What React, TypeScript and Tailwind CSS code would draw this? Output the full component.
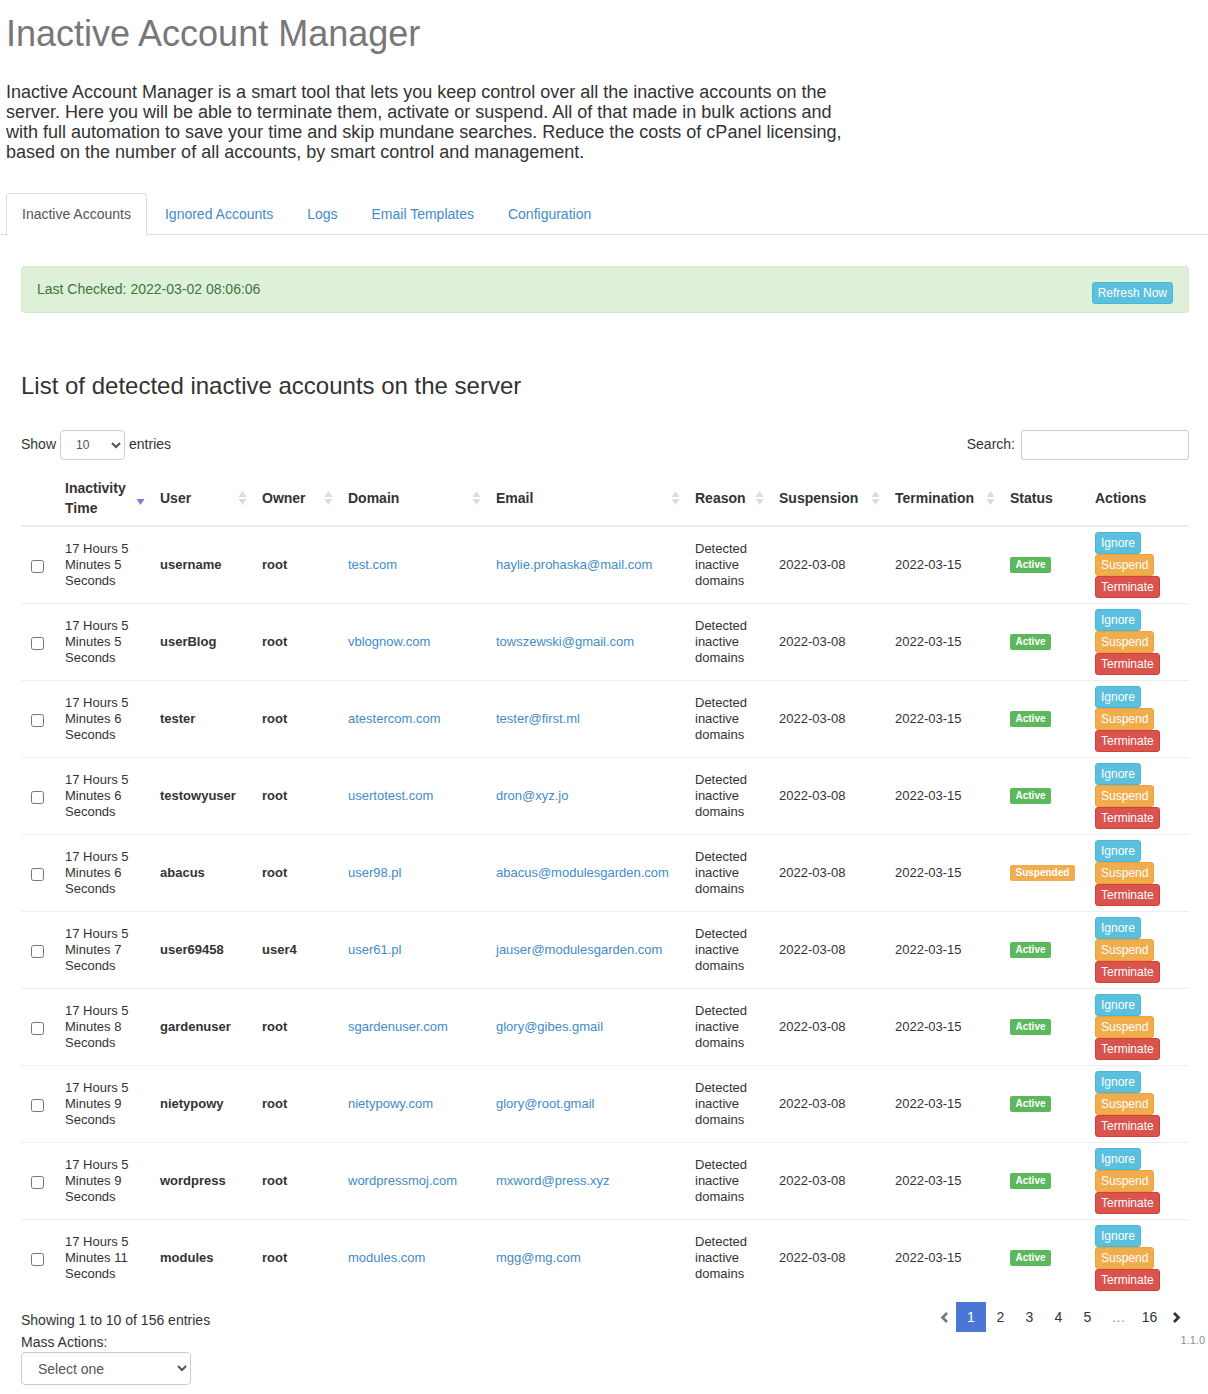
import React from "react";

type Row = { sec: string; user: string; owner: string; domain: string; email: string; status: "Active" | "Suspended" };

const rows: Row[] = [
  { sec: "Minutes 5", user: "username", owner: "root", domain: "test.com", email: "haylie.prohaska@mail.com", status: "Active" },
  { sec: "Minutes 5", user: "userBlog", owner: "root", domain: "vblognow.com", email: "towszewski@gmail.com", status: "Active" },
  { sec: "Minutes 6", user: "tester", owner: "root", domain: "atestercom.com", email: "tester@first.ml", status: "Active" },
  { sec: "Minutes 6", user: "testowyuser", owner: "root", domain: "usertotest.com", email: "dron@xyz.jo", status: "Active" },
  { sec: "Minutes 6", user: "abacus", owner: "root", domain: "user98.pl", email: "abacus@modulesgarden.com", status: "Suspended" },
  { sec: "Minutes 7", user: "user69458", owner: "user4", domain: "user61.pl", email: "jauser@modulesgarden.com", status: "Active" },
  { sec: "Minutes 8", user: "gardenuser", owner: "root", domain: "sgardenuser.com", email: "glory@gibes.gmail", status: "Active" },
  { sec: "Minutes 9", user: "nietypowy", owner: "root", domain: "nietypowy.com", email: "glory@root.gmail", status: "Active" },
  { sec: "Minutes 9", user: "wordpress", owner: "root", domain: "wordpressmoj.com", email: "mxword@press.xyz", status: "Active" },
  { sec: "Minutes 11", user: "modules", owner: "root", domain: "modules.com", email: "mgg@mg.com", status: "Active" },
];

const colWidths = [34, 95, 102, 86, 148, 199, 84, 116, 115, 85, 104];

function SortIcon({ activeDown = false }: { activeDown?: boolean }) {
  return (
    <svg className="absolute right-[5px] top-[21px]" width="9" height="14" viewBox="0 0 9 14">
      {!activeDown && <path d="M4.5 0 L8.5 6 H0.5 Z" fill="#dcdcdc" />}
      <path d="M0.5 8 H8.5 L4.5 14 Z" fill={activeDown ? "#7a7fd8" : "#dcdcdc"} />
    </svg>
  );
}

function Th({ children, sort = false, activeDown = false }: { children?: React.ReactNode; sort?: boolean; activeDown?: boolean }) {
  return (
    <th className="relative h-[56px] border-b-2 border-[#eeeeee] px-[10px] text-left align-middle text-[14px] font-bold leading-[20px] text-[#333333]">
      {children}
      {sort && <SortIcon activeDown={activeDown} />}
    </th>
  );
}

function Btn({ label, color }: { label: string; color: string }) {
  return (
    <button className={`h-[22px] rounded-[3px] border px-[5px] text-[12px] leading-[18px] text-white ${color}`}>{label}</button>
  );
}

function Chevron({ dir, color }: { dir: "left" | "right"; color: string }) {
  return (
    <svg width="9" height="11" viewBox="0 0 9 11" fill="none" stroke={color} strokeWidth="2.7">
      <path d={dir === "left" ? "M7 1 L2.5 5.5 L7 10" : "M2 1 L6.5 5.5 L2 10"} />
    </svg>
  );
}

const td = "border-b border-[#eeeeee] px-[10px] align-middle text-[13px] group-last:border-b-0";

export default function App() {
  return (
    <div className="min-h-[1394px] bg-white font-['Liberation_Sans',Arial,sans-serif] text-[14px] text-[#333333]">
      <div className="px-[6px]">
        <h1 className="pt-[14px] text-[36px] font-normal leading-[40px] text-[#777777]">Inactive Account Manager</h1>
        <p className="mt-[28px] w-[850px] text-[18px] leading-[20px] text-[#333333]">
          Inactive Account Manager is a smart tool that lets you keep control over all the inactive accounts on the server. Here you will be able to terminate them, activate or suspend. All of that made in bulk actions and with full automation to save your time and skip mundane searches. Reduce the costs of cPanel licensing, based on the number of all accounts, by smart control and management.
        </p>
      </div>

      <div className="mt-[31px] flex h-[42px] border-b border-[#dddddd] pl-[6px]">
        <a className="-mb-px h-[43px] rounded-t-[4px] border border-b-0 border-[#dddddd] bg-white px-[15px] pt-[10px] leading-[20px] text-[#555555]">Inactive Accounts</a>
        {["Ignored Accounts", "Logs", "Email Templates", "Configuration"].map((t) => (
          <a key={t} className="ml-[2px] px-[16px] pt-[11px] leading-[20px] text-[#428bca]">{t}</a>
        ))}
      </div>

      <div className="px-[21px] pr-[19px]">
        <div className="mt-[31px] flex h-[47px] justify-between rounded-[4px] border border-[#d6e9c6] bg-[#dff0d8] pl-[15px] pr-[15px] text-[#3c763d]">
          <span className="pt-[13px] leading-[18px]">Last Checked: 2022-03-02 08:06:06</span>
          <button className="mt-[15px] h-[22px] rounded-[3px] border border-[#46b8da] bg-[#5bc0de] px-[5px] text-[12px] leading-[18px] text-white">Refresh Now</button>
        </div>

        <h2 className="mt-[59px] text-[24px] font-normal leading-[28px] text-[#333333]">List of detected inactive accounts on the server</h2>

        <div className="mt-[30px] flex h-[30px] items-center justify-between">
          <div className="flex items-center">
            <span className="mb-[2px]">Show</span>
            <select className="mx-[4px] h-[30px] w-[65px] rounded-[4px] border border-[#cccccc] bg-white pl-[11px] text-[12px] text-[#555555]">
              <option>10</option>
            </select>
            <span className="mb-[2px]">entries</span>
          </div>
          <div className="flex items-center">
            <span className="mb-[2px] mr-[6px]">Search:</span>
            <input className="h-[30px] w-[168px] rounded-[3px] border border-[#cccccc] bg-white" />
          </div>
        </div>

        <table className="mt-[10px] w-[1168px] table-fixed border-collapse">
          <colgroup>
            {colWidths.map((w, i) => (
              <col key={i} style={{ width: w }} />
            ))}
          </colgroup>
          <thead>
            <tr>
              <Th />
              <Th sort activeDown>Inactivity Time</Th>
              <Th sort>User</Th>
              <Th sort>Owner</Th>
              <Th sort>Domain</Th>
              <Th sort>Email</Th>
              <Th sort>Reason</Th>
              <Th sort>Suspension</Th>
              <Th sort>Termination</Th>
              <Th>Status</Th>
              <Th>Actions</Th>
            </tr>
          </thead>
          <tbody>
            {rows.map((r) => (
              <tr key={r.user} className="group h-[77px]">
                <td className={`${td} !px-0`}>
                  <input type="checkbox" className="ml-[10px] mt-[4px] block h-[13px] w-[13px]" />
                </td>
                <td className={`${td} leading-[16px]`}>17 Hours 5 {r.sec} Seconds</td>
                <td className={`${td} font-bold`}>{r.user}</td>
                <td className={`${td} font-bold`}>{r.owner}</td>
                <td className={`${td} whitespace-nowrap text-[#428bca]`}>{r.domain}</td>
                <td className={`${td} whitespace-nowrap text-[#428bca]`}>{r.email}</td>
                <td className={`${td} leading-[16px]`}>Detected inactive domains</td>
                <td className={td}>2022-03-08</td>
                <td className={td}>2022-03-15</td>
                <td className={td}>
                  <span className={`block w-fit whitespace-nowrap rounded-[2px] px-[5.5px] text-[10px] font-bold leading-[16px] text-white ${r.status === "Active" ? "bg-[#5cb85c]" : "bg-[#f0ad4e]"}`}>{r.status}</span>
                </td>
                <td className={td}>
                  <div className="flex flex-col items-start">
                    <Btn label="Ignore" color="border-[#46b8da] bg-[#5bc0de]" />
                    <Btn label="Suspend" color="border-[#eea236] bg-[#f0ad4e]" />
                    <Btn label="Terminate" color="border-[#d43f3a] bg-[#d9534f]" />
                  </div>
                </td>
              </tr>
            ))}
          </tbody>
        </table>

        <div className="flex justify-between">
          <div>
            <div className="mt-[14px] leading-[20px]">Showing 1 to 10 of 156 entries</div>
            <div className="mt-[2px] leading-[20px]">Mass Actions:</div>
            <select className="h-[33px] w-[170px] rounded-[4px] border border-[#cccccc] bg-white pl-[12px] text-[14px] text-[#555555]">
              <option>Select one</option>
            </select>
          </div>
          <div className="-mr-[16px] flex flex-col items-end">
            <div className="mr-[25px] mt-[6px] flex h-[30px] items-center text-[14px]">
              <span className="mr-[7px]"><Chevron dir="left" color="#777777" /></span>
              <span className="flex h-[30px] w-[30px] items-center justify-center bg-[#4a77d4] text-white">1</span>
              {["2", "3", "4", "5"].map((n) => (
                <span key={n} className="w-[29px] text-center">{n}</span>
              ))}
              <span className="w-[33px] text-center text-[#999999]">…</span>
              <span className="w-[29px] text-center">16</span>
              <span className="ml-[8px] -mr-[1px]"><Chevron dir="right" color="#333333" /></span>
            </div>
            <div className="mt-[1px] text-[11px] leading-[14px] text-[#8a8f99]">1.1.0</div>
          </div>
        </div>
      </div>
    </div>
  );
}
